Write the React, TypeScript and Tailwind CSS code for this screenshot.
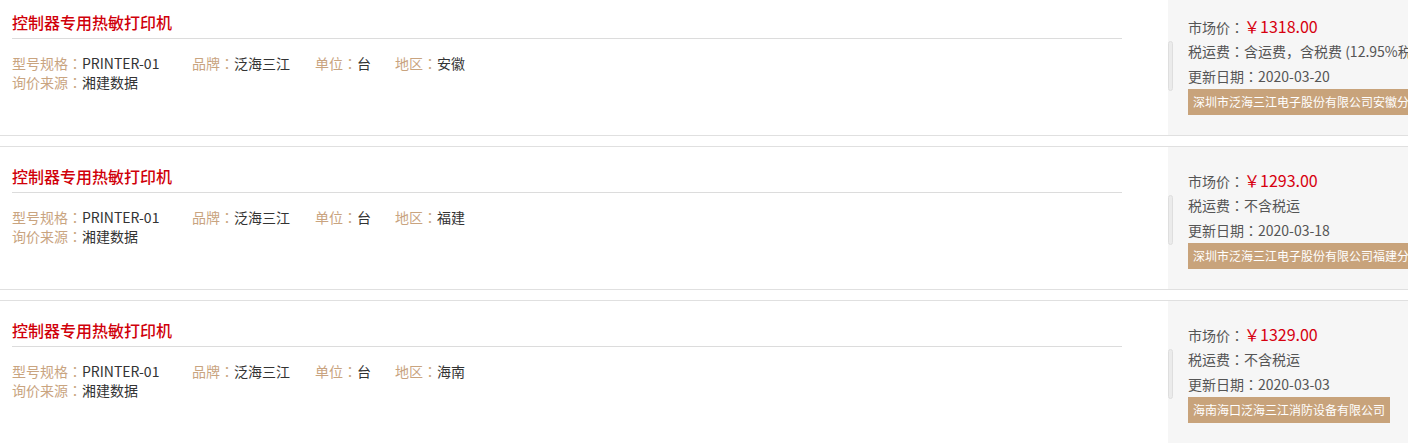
import React from 'react';

interface Quote {
  title: string;
  model: string;
  brand: string;
  unit: string;
  region: string;
  source: string;
  price: string;
  tax: string;
  date: string;
  company: string;
}

const quotes: Quote[] = [
  {
    title: '控制器专用热敏打印机',
    model: 'PRINTER-01',
    brand: '泛海三江',
    unit: '台',
    region: '安徽',
    source: '湘建数据',
    price: '￥1318.00',
    tax: '含运费，含税费 (12.95%税率)',
    date: '2020-03-20',
    company: '深圳市泛海三江电子股份有限公司安徽分公司',
  },
  {
    title: '控制器专用热敏打印机',
    model: 'PRINTER-01',
    brand: '泛海三江',
    unit: '台',
    region: '福建',
    source: '湘建数据',
    price: '￥1293.00',
    tax: '不含税运',
    date: '2020-03-18',
    company: '深圳市泛海三江电子股份有限公司福建分公司',
  },
  {
    title: '控制器专用热敏打印机',
    model: 'PRINTER-01',
    brand: '泛海三江',
    unit: '台',
    region: '海南',
    source: '湘建数据',
    price: '￥1329.00',
    tax: '不含税运',
    date: '2020-03-03',
    company: '海南海口泛海三江消防设备有限公司',
  },
];

// centred full-width colon, as in the original font
const Colon = () => <span style={{ fontFamily: '"Noto Sans CJK TC", sans-serif' }}>：</span>;

const Field: React.FC<{ label: string; value: string; className?: string }> = ({ label, value, className }) => (
  <span className={`inline-block ${className || ''}`}>
    <span className="text-[#c9a47f]">
      {label}
      <Colon />
    </span>
    <span className="text-[#333]">{value}</span>
  </span>
);

const QuoteRow: React.FC<{ q: Quote }> = ({ q }) => (
  <div className="flex h-[144px] border-y border-[#e0e0e0] mb-[10px]">
    {/* Left info */}
    <div className="w-[1168px] shrink-0 pl-3 pr-[46px] pt-[18px]">
      <h3 className="text-[16px] leading-[22px] text-[#d0000a] font-medium pb-[5px] border-b border-[#dcdcdc]">
        {q.title}
      </h3>
      <div className="pt-[15px] text-[14px] leading-[19px]">
        <div className="flex whitespace-nowrap">
          <Field label="型号规格" value={q.model} className="w-[180px]" />
          <Field label="品牌" value={q.brand} className="w-[123px]" />
          <Field label="单位" value={q.unit} className="w-[80px]" />
          <Field label="地区" value={q.region} />
        </div>
        <div>
          <Field label="询价来源" value={q.source} />
        </div>
      </div>
    </div>

    {/* Right price panel */}
    <div className="relative w-[300px] shrink-0 bg-[#f6f6f6] pl-5 pt-[21px] text-[14px] text-[#555] whitespace-nowrap">
      <div className="absolute left-0 top-[48px] w-[5px] h-[50px] rounded-sm bg-[#ebebeb] border border-[#dedede]" />
      <div className="h-[25px] leading-[25px] flex items-baseline">
        <span>
          市场价
          <Colon />
        </span>
        <span className="text-[16px] text-[#d7000f]">{q.price}</span>
      </div>
      <div className="h-[25px] leading-[25px]">
        税运费
        <Colon />
        {q.tax}
      </div>
      <div className="h-[25px] leading-[25px]">
        更新日期
        <Colon />
        {q.date}
      </div>
      <div className="inline-block h-[26px] leading-[26px] px-[5px] bg-[#c8a37b] text-white text-[12px]">
        {q.company}
      </div>
    </div>
  </div>
);

export default function App() {
  return (
    <div
      className="w-[1408px] h-[443px] overflow-hidden bg-white"
      style={{ fontFamily: '"Noto Sans CJK SC", "Noto Sans", sans-serif' }}
    >
      <div className="-mt-2 w-[1468px]">
        {quotes.map((q, i) => (
          <QuoteRow key={i} q={q} />
        ))}
      </div>
    </div>
  );
}
